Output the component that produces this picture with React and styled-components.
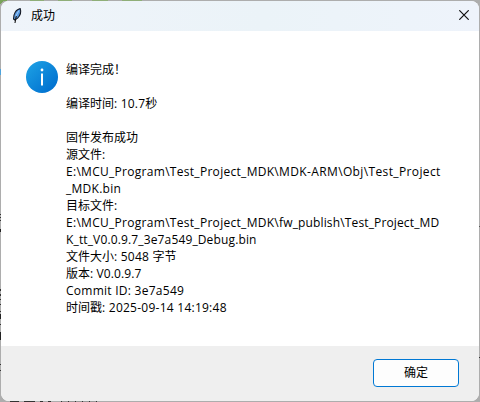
import React from "react";
import styled, { createGlobalStyle } from "styled-components";

const Global = createGlobalStyle`
  * { box-sizing: border-box; }
  body { margin: 0; overflow: hidden; }
`;

const Desktop = styled.div`
  width: 480px;
  height: 402px;
  padding: 1px 1px 1px;
  background:
    linear-gradient(#333, #333) 10px 401px / 9px 1px no-repeat,
    linear-gradient(#333, #333) 24px 401px / 11px 1px no-repeat,
    linear-gradient(#333, #333) 40px 401px / 3px 1px no-repeat,
    linear-gradient(#333, #333) 48px 401px / 3px 1px no-repeat,
    repeating-linear-gradient(90deg, #333 0 1px, #999 1px 7px) 61px 401px / 36px 1px no-repeat,
    linear-gradient(#333, #333) 0 214px / 1px 1px no-repeat,
    linear-gradient(#333, #333) 0 217px / 1px 1px no-repeat,
    linear-gradient(#333, #333) 0 220px / 1px 1px no-repeat,
    linear-gradient(#222, #222) 0 229px / 1px 3px no-repeat,
    linear-gradient(#333, #333) 0 289px / 1px 2px no-repeat,
    linear-gradient(#333, #333) 0 294px / 1px 2px no-repeat,
    linear-gradient(#333, #333) 0 299px / 1px 1px no-repeat,
    linear-gradient(#333, #333) 0 304px / 1px 1px no-repeat,
    linear-gradient(#333, #333) 0 311px / 1px 1px no-repeat,
    linear-gradient(#222, #222) 0 314px / 1px 5px no-repeat,
    linear-gradient(#333, #333) 0 324px / 1px 1px no-repeat,
    linear-gradient(#222, #222) 0 332px / 1px 8px no-repeat,
    linear-gradient(#333, #333) 0 364px / 1px 1px no-repeat,
    linear-gradient(#333, #333) 0 370px / 1px 1px no-repeat,
    linear-gradient(#4da3dc, #4da3dc) 0 69px / 1px 6px no-repeat,
    linear-gradient(#555, #555) 479px 226px / 1px 1px no-repeat,
    linear-gradient(#333, #333) 479px 357px / 1px 1px no-repeat,
    linear-gradient(90deg, #79a35a 0 7px, transparent 7px 30px, #8fae78 30px 44px, transparent 44px 58px, #8fae78 58px 72px, transparent 72px 92px, #8fae78 92px 108px, transparent 108px 122px, #8fae78 122px 142px, transparent 142px) 0 0 / 480px 1px no-repeat,
    linear-gradient(135deg, #79a35a 0 3px, transparent 3px) 0 0 / 8px 8px no-repeat,
    #adadad;
`;

const Dialog = styled.section`
  display: flex;
  flex-direction: column;
  height: 400px;
  border-radius: 8px;
  overflow: hidden;
  background: #fff;
  color: #000;
  font: 12px/17px "Open Sans", "Noto Sans CJK SC", sans-serif;
`;

const TitleBar = styled.header`
  display: flex;
  align-items: center;
  height: 30px;
  flex: none;
  padding: 0 10px 2px 9px;
  background: linear-gradient(90deg, #eff4fa, #ebf3f8 55%, #eef3fb);
`;

const Title = styled.h1`
  flex: 1;
  margin: 0 0 0 7px;
  font: inherit;
`;

const CloseButton = styled.button`
  display: flex;
  width: 10px;
  height: 10px;
  padding: 0;
  border: 0;
  background: none;
`;

const Body = styled.main`
  display: flex;
  flex: 1;
  align-items: flex-start;
  padding: 30px 0 0 25px;
`;

const Message = styled.div`
  margin-left: 8px;
`;

const Line = styled.p`
  height: 17px;
  margin: 0;
  white-space: pre;
`;

const Run = styled.span`
  letter-spacing: ${(p) => p.$track ?? 0}px;
`;

const Footer = styled.footer`
  display: flex;
  justify-content: flex-end;
  flex: none;
  height: 55px;
  padding: 13px 20px 0 0;
  background: #efefef;
`;

const OkButton = styled.button`
  width: 86px;
  height: 28px;
  padding: 0 0 1px;
  border: 1px solid #0078d4;
  border-radius: 4px;
  background: #fdfdfd;
  color: #000;
  font: inherit;
`;

const Feather = () => (
  <svg width="14" height="17" viewBox="0 0 14 17">
    <path d="M10.2 1.6C7.6 2.2 4.9 4.8 4 8.2L3.5 12l1.3 1L7.6 11.2C10 8.6 11.3 4.6 10.2 1.6Z" fill="#5596de" stroke="#161b26" strokeWidth="1.1" />
    <path d="M8.8 3.6L5.4 10" stroke="#a9d2fb" strokeWidth=".9" />
    <path d="M6.3 9L5 16" stroke="#111" strokeWidth="1.1" fill="none" />
  </svg>
);

const InfoIcon = () => (
  <svg width="32" height="32" viewBox="0 0 32 32">
    <defs>
      <linearGradient id="info" x1="0" y1="0" x2="1" y2="1">
        <stop offset=".1" stopColor="#1b9ee3" />
        <stop offset=".9" stopColor="#006fcf" />
      </linearGradient>
    </defs>
    <circle cx="16" cy="16" r="16" fill="url(#info)" />
    <circle cx="16" cy="9" r="1.4" fill="#fff" />
    <path d="M16 12.5v12" stroke="#fff" strokeWidth="2" />
  </svg>
);

const LINES = [
  [["编译完成！"]],
  [],
  [["编译时间"], [": 10.7", 0.2], ["秒"]],
  [],
  [["固件发布成功"]],
  [["源文件"], [":", 0]],
  [["E:\\MCU_Program\\Test_Project_MDK\\", 0.29], ["MDK-ARM\\Obj\\Test_Project", 0.37]],
  [["_MDK.bin", 0.26]],
  [["目标文件"], [":", 0]],
  [["E:\\MCU_Program\\Test_Project_MDK\\", 0.29], ["fw_publish\\Test_Project_MD", 0.14]],
  [["K_tt_V0.0.9.7_3e7a549_Debug.bin", 0.14]],
  [["文件大小"], [": 5048 ", 0.22], ["字节"]],
  [["版本"], [": V0.0.9.7", 0.12]],
  [["Commit ID: 3e7a549", 0.26]],
  [["时间戳"], [": 2025-09-14 14:19:48", 0.25]],
];

export default function App() {
  return (
    <>
      <Global />
      <Desktop>
        <Dialog>
          <TitleBar>
            <Feather />
            <Title>成功</Title>
            <CloseButton aria-label="关闭">
              <svg width="10" height="10" viewBox="0 0 10 10">
                <path d="M.3 .3l9.4 9.4M9.7 .3l-9.4 9.4" stroke="#111" strokeWidth="1.2" />
              </svg>
            </CloseButton>
          </TitleBar>
          <Body>
            <InfoIcon />
            <Message>
              {LINES.map((runs, i) => (
                <Line key={i}>
                  {runs.map(([text, track], j) => (
                    <Run key={j} $track={track}>{text}</Run>
                  ))}
                </Line>
              ))}
            </Message>
          </Body>
          <Footer>
            <OkButton>确定</OkButton>
          </Footer>
        </Dialog>
      </Desktop>
    </>
  );
}
